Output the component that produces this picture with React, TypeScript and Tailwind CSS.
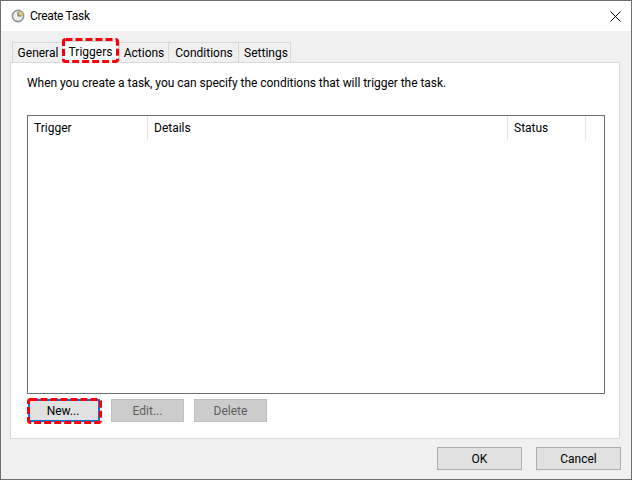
const tabs = ['General', 'Triggers', 'Actions', 'Conditions', 'Settings'];
const tabWidths: Record<string, string> = {
    General: 'w-[50px] pl-[1px]',
    Triggers: 'w-[57px]',
    Actions: 'w-[49px]',
    Conditions: 'w-[70px] pl-[1px]',
    Settings: 'w-[53px] pl-[3px]',
};

const columns = [
    { label: 'Trigger', width: 'w-[120px]' },
    { label: 'Details', width: 'w-[360px]' },
    { label: 'Status', width: 'w-[78px]' },
];

const ClockIcon = () => (
    <svg width="14" height="14" viewBox="0 0 14 14" className="shrink-0">
        <circle cx="7" cy="7" r="5.6" fill="#f1f1ee" stroke="#8f9498" strokeWidth="1.6" />
        <path d="M7 7V2.2A4.8 4.8 0 0 1 11.8 7Z" fill="#ecc874" />
        <path d="M7 7V2.8M7 7H10.6" stroke="#5f6468" strokeWidth="1" fill="none" />
    </svg>
);

const CloseIcon = () => (
    <svg width="11" height="11" viewBox="0 0 11 11" className="ml-auto shrink-0">
        <path d="M0.5 0.5L10.5 10.5M10.5 0.5L0.5 10.5" stroke="#000" strokeWidth="1" fill="none" />
    </svg>
);

// red dashed annotation drawn over a control
const Marker = ({ w, h, className }: { w: number; h: number; className: string }) => (
    <svg width={w} height={h} className={`absolute pointer-events-none ${className}`}>
        <rect x="1.5" y="1.5" width={w - 3} height={h - 3} rx="2" fill="none" stroke="#fb0007" strokeWidth="3" strokeDasharray="7 3" />
    </svg>
);

export default function App() {
    return (
        <div className="w-[632px] h-[480px] flex flex-col bg-[#f0f0f0] border border-[#6e6e6e] text-[12px] leading-[16px] text-black overflow-hidden font-['Roboto','Noto_Sans',sans-serif]">
            {/* title bar */}
            <div className="h-[30px] shrink-0 bg-white flex items-center pl-[10px] pr-[10px]">
                <ClockIcon />
                <span className="ml-[5px] mt-[-1px] tracking-[-0.3px]">Create Task</span>
                <CloseIcon />
            </div>

            <div className="flex-1 flex flex-col px-[9px] pt-[11px]">
                {/* tabs */}
                <div className="h-[20px] flex items-end pl-[2px] relative z-10">
                    {tabs.map(tab => (
                        <div key={tab} className="relative">
                            {tab === 'Triggers' ? (
                                <div className={`${tabWidths[tab]} h-[22px] bg-white border-l border-r border-t border-[#d9d9d9] flex items-center justify-center mb-[-1px] pb-[2px]`}>
                                    {tab}
                                </div>
                            ) : (
                                <div className={`${tabWidths[tab]} h-[20px] bg-[#f0f0f0] border-l border-t border-[#d9d9d9] flex items-center justify-center ${tab === 'Settings' ? 'border-r' : ''}`}>
                                    {tab}
                                </div>
                            )}
                            {tab === 'Triggers' && <Marker w={57} h={25} className="left-0 top-[-3px]" />}
                        </div>
                    ))}
                </div>

                {/* tab panel */}
                <div className="h-[377px] w-[610px] bg-white border border-[#d9d9d9] px-[16px] pt-[12px] flex flex-col">
                    <p className="h-[16px] tracking-[-0.035px]">When you create a task, you can specify the conditions that will trigger the task.</p>
                    <div className="mt-[24px] h-[279px] w-[578px] border border-[#6e6e6e] shrink-0">
                        <div className="flex h-[24px]">
                            {columns.map(col => (
                                <div key={col.label} className={`${col.width} border-r border-[#e5e5e5] pl-[6px] pt-[4px]`}>
                                    {col.label}
                                </div>
                            ))}
                        </div>
                    </div>
                    <div className="flex mt-[5px] pl-[1px]">
                        <div className="relative mr-[11px]">
                            <button className="w-[72px] h-[23px] bg-[#e1e1e1] border-2 border-[#0078d7] flex items-center justify-center pr-[2px]">New...</button>
                            <Marker w={75} h={26} className="left-[-1px] top-[-1px]" />
                        </div>
                        <button className="w-[73px] h-[23px] mr-[10px] bg-[#cccccc] border border-[#bfbfbf] text-[#5e5e5e] flex items-center justify-center">Edit...</button>
                        <button className="w-[73px] h-[23px] bg-[#cccccc] border border-[#bfbfbf] text-[#5e5e5e] flex items-center justify-center">Delete</button>
                    </div>
                </div>

                {/* footer */}
                <div className="flex justify-end gap-[14px] mt-[8px] pr-[1px]">
                    <button className="w-[85px] h-[23px] bg-[#e1e1e1] border border-[#adadad] flex items-center justify-center">OK</button>
                    <button className="w-[85px] h-[23px] bg-[#e1e1e1] border border-[#adadad] flex items-center justify-center">Cancel</button>
                </div>
            </div>
        </div>
    );
}
